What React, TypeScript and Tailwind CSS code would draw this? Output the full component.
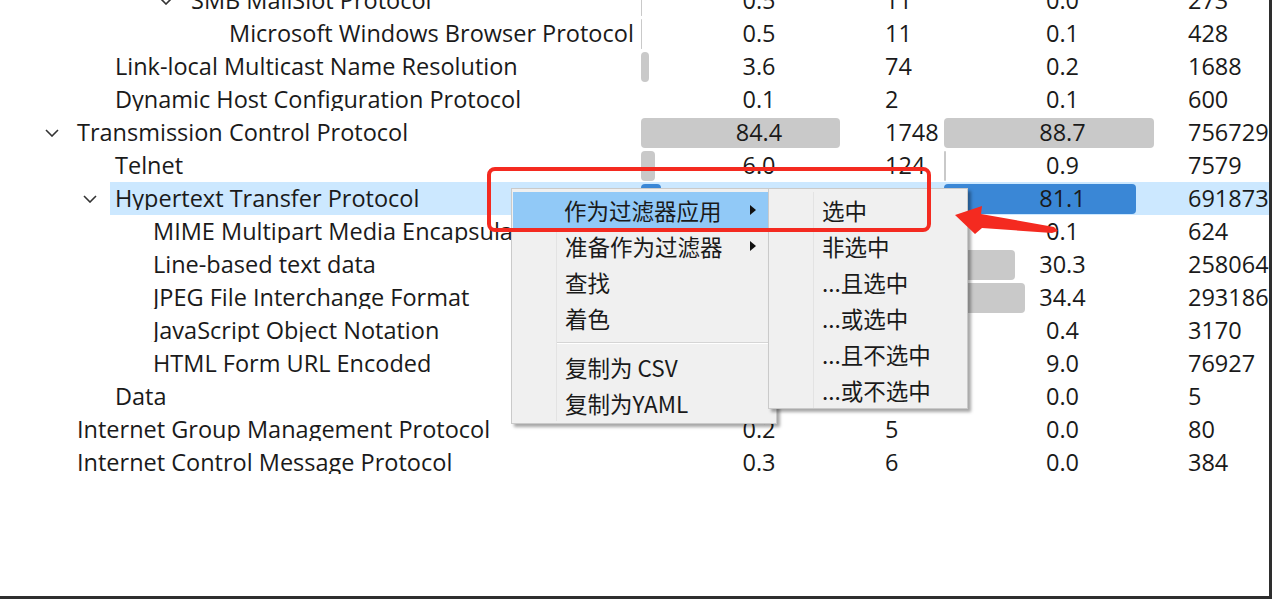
type Row = {
  name: string;
  level: number;
  open?: boolean;
  selected?: boolean;
  p1: number;
  c1: string;
  n: string;
  p2: number;
  c2: string;
  b: string;
};

const rows: Row[] = [
  { name: 'SMB MailSlot Protocol', level: 3, open: true, p1: 0.5, c1: '0.5', n: '11', p2: 0.0, c2: '0.0', b: '273' },
  { name: 'Microsoft Windows Browser Protocol', level: 4, p1: 0.5, c1: '0.5', n: '11', p2: 0.1, c2: '0.1', b: '428' },
  { name: 'Link-local Multicast Name Resolution', level: 1, p1: 3.6, c1: '3.6', n: '74', p2: 0.2, c2: '0.2', b: '1688' },
  { name: 'Dynamic Host Configuration Protocol', level: 1, p1: 0.1, c1: '0.1', n: '2', p2: 0.1, c2: '0.1', b: '600' },
  { name: 'Transmission Control Protocol', level: 0, open: true, p1: 84.4, c1: '84.4', n: '1748', p2: 88.7, c2: '88.7', b: '756729' },
  { name: 'Telnet', level: 1, p1: 6.0, c1: '6.0', n: '124', p2: 0.9, c2: '0.9', b: '7579' },
  { name: 'Hypertext Transfer Protocol', level: 1, open: true, selected: true, p1: 8.6, c1: '8.6', n: '178', p2: 81.1, c2: '81.1', b: '691873' },
  { name: 'MIME Multipart Media Encapsulation', level: 2, p1: 0.2, c1: '0.2', n: '4', p2: 0.1, c2: '0.1', b: '624' },
  { name: 'Line-based text data', level: 2, p1: 3.1, c1: '3.1', n: '64', p2: 30.3, c2: '30.3', b: '258064' },
  { name: 'JPEG File Interchange Format', level: 2, p1: 0.4, c1: '0.4', n: '8', p2: 34.4, c2: '34.4', b: '293186' },
  { name: 'JavaScript Object Notation', level: 2, p1: 1.1, c1: '1.1', n: '23', p2: 0.4, c2: '0.4', b: '3170' },
  { name: 'HTML Form URL Encoded', level: 2, p1: 3.5, c1: '3.5', n: '72', p2: 9.0, c2: '9.0', b: '76927' },
  { name: 'Data', level: 1, p1: 0.0, c1: '0.0', n: '1', p2: 0.0, c2: '0.0', b: '5' },
  { name: 'Internet Group Management Protocol', level: 0, p1: 0.2, c1: '0.2', n: '5', p2: 0.0, c2: '0.0', b: '80' },
  { name: 'Internet Control Message Protocol', level: 0, p1: 0.3, c1: '0.3', n: '6', p2: 0.0, c2: '0.0', b: '384' },
];

// gutter before the (selectable) name, and the rest of the first column
const gutterW = ['w-[72px]', 'w-[110px]', 'w-[148px]', 'w-[186px]', 'w-[224px]'];
const nameW = ['w-[569px]', 'w-[531px]', 'w-[493px]', 'w-[455px]', 'w-[417px]'];

function Chevron() {
  return (
    <svg width="14" height="8" viewBox="0 0 14 8" className="shrink-0">
      <polyline points="1,1 7,7 13,1" fill="none" stroke="#333" strokeWidth="1.6" />
    </svg>
  );
}

function BarCell({ w, px, pct, label, selected }: { w: string; px: number; pct: number; label: string; selected?: boolean }) {
  // sub-pixel bars are not painted, like the original widget
  const barW = Math.floor((pct * px) / 100);
  return (
    <div className={`${w} grid h-full shrink-0 grid-cols-1 items-center`}>
      <div
        className={`col-start-1 row-start-1 h-[30px] justify-self-start rounded-[4px] ${
          selected ? 'bg-[#3a87d6]' : 'bg-[#c9c9c9]'
        }`}
        style={{ width: barW }}
      />
      <span className="col-start-1 row-start-1 text-center">{label}</span>
    </div>
  );
}

function TreeRow({ row }: { row: Row }) {
  return (
    <div className="flex h-[33px]">
      <div className={`${gutterW[row.level]} flex shrink-0 items-center justify-end pr-[13px]`}>
        {row.open && <Chevron />}
      </div>
      <div className={`flex flex-1 items-center ${row.selected ? 'bg-[#cce8ff]' : ''}`}>
        <div className={`${nameW[row.level]} shrink-0 overflow-hidden whitespace-nowrap pl-[5px]`}>{row.name}</div>
        <BarCell w="w-[236px]" px={236} pct={row.p1} label={row.c1} selected={row.selected} />
        <div className="w-[67px] shrink-0 pl-[8px]">{row.n}</div>
        <BarCell w="w-[237px]" px={237} pct={row.p2} label={row.c2} selected={row.selected} />
        <div className="flex-1 pl-[7px]">{row.b}</div>
      </div>
    </div>
  );
}

function SubArrow() {
  return (
    <svg width="6" height="10" viewBox="0 0 6 10">
      <polygon points="0,0 6,5 0,10" fill="#111" />
    </svg>
  );
}

function MenuItem({ label, sub, active }: { label: string; sub?: boolean; active?: boolean }) {
  return (
    <div className={`flex h-[36px] items-center ${active ? 'bg-[#91c9f7]' : ''}`}>
      <div className="w-[43px] shrink-0 self-stretch" />
      <div
        className={`flex flex-1 items-center justify-between self-stretch pl-[8px] pr-[19px] ${
          active ? '' : 'border-l border-[#e3e3e3]'
        }`}
      >
        <span>{label}</span>
        {sub && <SubArrow />}
      </div>
    </div>
  );
}

function SubItem({ label }: { label: string }) {
  return (
    <div className="flex h-[36px] items-center">
      <div className="w-[43px] shrink-0 self-stretch" />
      <div className="flex flex-1 items-center self-stretch border-l border-[#e3e3e3] pl-[8px]">{label}</div>
    </div>
  );
}

export default function App() {
  return (
    <div className="relative h-[599px] w-[1272px] overflow-hidden border-r-[3px] border-b-[3px] border-[#2e2e2e] bg-white font-['Open_Sans','Noto_Sans_CJK_SC',sans-serif] text-[23.5px] leading-none text-[#1a1a1a]">
      {/* Protocol hierarchy tree */}
      <div className="-mt-[16px]">
        {rows.map((row) => (
          <TreeRow key={row.name} row={row} />
        ))}
      </div>

      {/* Context menu */}
      <div className="absolute top-[188px] left-[511px] w-[266px] border border-[#cacaca] bg-[#f0f0f0] px-[1px] pt-[3px] pb-[2px] font-['Noto_Sans_CJK_SC',sans-serif] text-[22.5px] shadow-[3px_3px_3px_rgba(0,0,0,0.35)]">
        <MenuItem label="作为过滤器应用" sub active />
        <MenuItem label="准备作为过滤器" sub />
        <MenuItem label="查找" />
        <MenuItem label="着色" />
        <div className="flex h-[13px]">
          <div className="w-[43px] shrink-0" />
          <div className="flex flex-1 items-center border-l border-[#e3e3e3]">
            <div className="h-[2px] w-full border-t border-[#d5d5d5] border-b border-b-white" />
          </div>
        </div>
        <MenuItem label="复制为 CSV" />
        <MenuItem label="复制为YAML" />
      </div>

      {/* Submenu */}
      <div className="absolute top-[188px] left-[768px] w-[200px] border border-[#cacaca] bg-[#f0f0f0] px-[1px] pt-[3px] font-['Noto_Sans_CJK_SC',sans-serif] text-[22.5px] shadow-[3px_3px_3px_rgba(0,0,0,0.35)]">
        <SubItem label="选中" />
        <SubItem label="非选中" />
        <SubItem label="...且选中" />
        <SubItem label="...或选中" />
        <SubItem label="...且不选中" />
        <SubItem label="...或不选中" />
      </div>

      {/* Annotation: red frame and arrow */}
      <div className="pointer-events-none absolute top-[167px] left-[487px] h-[65px] w-[444px] rounded-[8px] border-[4px] border-[#f42a20]" />
      <svg className="pointer-events-none absolute top-[200px] left-[940px]" width="122" height="40" viewBox="0 0 122 40">
        <polygon points="15,15 42,6 41,14 114,27 118,31 112,33 42,28 35,34" fill="#f42a20" />
      </svg>
    </div>
  );
}
